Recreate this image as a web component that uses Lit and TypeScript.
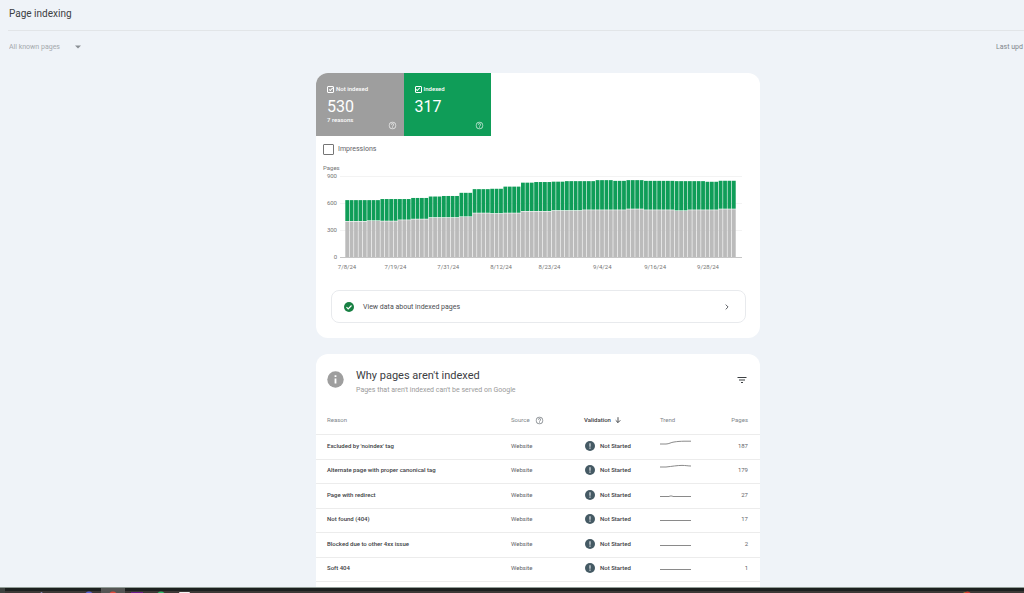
import { LitElement, html, css, svg, nothing } from "lit";
import { customElement, property } from "lit/decorators.js";

interface Run {
  days: number;
  value: number;
}

const NOT_INDEXED: Run[] = [
  { days: 5, value: 393 }, { days: 3, value: 400 }, { days: 4, value: 396 },
  { days: 3, value: 409 }, { days: 4, value: 418 }, { days: 7, value: 435 },
  { days: 3, value: 444 }, { days: 4, value: 485 }, { days: 3, value: 480 },
  { days: 4, value: 485 }, { days: 7, value: 504 }, { days: 7, value: 513 },
  { days: 10, value: 520 }, { days: 4, value: 530 }, { days: 7, value: 520 },
  { days: 3, value: 511 }, { days: 7, value: 520 }, { days: 4, value: 530 },
];

const TOTAL: Run[] = [
  { days: 8, value: 632 }, { days: 7, value: 644 }, { days: 4, value: 656 },
  { days: 3, value: 672 }, { days: 4, value: 678 }, { days: 3, value: 713 },
  { days: 4, value: 754 }, { days: 3, value: 758 }, { days: 4, value: 782 },
  { days: 3, value: 826 }, { days: 4, value: 833 }, { days: 3, value: 837 },
  { days: 7, value: 843 }, { days: 4, value: 854 }, { days: 3, value: 846 },
  { days: 4, value: 854 }, { days: 7, value: 846 }, { days: 7, value: 843 },
  { days: 3, value: 836 }, { days: 4, value: 847 },
];

const expand = (runs: Run[]): number[] =>
  runs.flatMap((r) => Array.from({ length: r.days }, () => r.value));

const DATES = ["7/8/24", "7/19/24", "7/31/24", "8/12/24", "8/23/24", "9/4/24", "9/16/24", "9/28/24"];

const REASONS = [
  { reason: "Excluded by 'noindex' tag", pages: "187", trend: "M0 8H6C9 8 11 6.3 14 6C18 5.4 20 5.3 24 5.2H31" },
  { reason: "Alternate page with proper canonical tag", pages: "179", trend: "M0 7H6C12 6.4 17 5.4 22 5.4C26 5.4 28 6 31 6" },
  { reason: "Page with redirect", pages: "27", trend: "M0 11.5H9L10 11H12L13 11.5H31" },
  { reason: "Not found (404)", pages: "17", trend: "M0 11.5H31" },
  { reason: "Blocked due to other 4xx issue", pages: "2", trend: "M0 11.5H31" },
  { reason: "Soft 404", pages: "1", trend: "M0 11.5H31" },
];

const helpIcon = html`<svg viewBox="0 0 24 24" width="9" height="9" fill="currentColor" aria-hidden="true">
  <path d="M11 18h2v-2h-2v2zm1-16C6.48 2 2 6.48 2 12s4.48 10 10 10 10-4.48 10-10S17.52 2 12 2zm0 18c-4.41 0-8-3.59-8-8s3.59-8 8-8 8 3.59 8 8-3.59 8-8 8zm0-14c-2.21 0-4 1.79-4 4h2c0-1.1.9-2 2-2s2 .9 2 2c0 2-3 1.75-3 5h2c0-2.25 3-2.5 3-5 0-2.21-1.79-4-4-4z"/>
</svg>`;

const alertIcon = html`<svg width="10" height="10" viewBox="0 0 10 10" aria-hidden="true">
  <circle cx="5" cy="5" r="5" fill="#455a64"/>
  <path d="M4.4 2.3h1.2v3.400H4.4zM4.4 6.600h1.200v1.200H4.400z" fill="#dfe5e8"/>
</svg>`;

@customElement("index-chart")
class IndexChart extends LitElement {
  static styles = css`
    :host { display: block; color: #757575; font-size: 6px; line-height: 8px; }
    .title { padding-left: 7px; }
    .plot { display: flex; padding: 0 18px 0 7px; }
    .scale { display: flex; flex-direction: column; justify-content: space-between; width: 14px; height: 89px; text-align: right; }
    .canvas { flex: 1; min-width: 0; height: 82px; margin: 4px 0 0 3px; display: block; }
    .dates { display: grid; grid-template-columns: 11fr 12fr 12fr 11fr 12fr 12fr 12fr 0; padding: 2px 52px 0 31px; }
    .date { display: flex; justify-content: center; width: 0; white-space: nowrap; }
  `;

  render() {
    const low = expand(NOT_INDEXED);
    const total = expand(TOTAL);
    const y = (v: number) => 81 - v * 0.09;
    const step = 391 / low.length;
    return html`
      <div class="title">Pages</div>
      <div class="plot">
        <div class="scale"><span>900</span><span>600</span><span>300</span><span>0</span></div>
        <svg class="canvas" viewBox="0 0 402 82" preserveAspectRatio="none" role="img" aria-label="Pages by day">
          ${[0, 27, 54].map((g) => svg`<rect x="0" y=${g} width="402" height="1" fill="#f3f3f3"/>`)}
          ${low.map((v, i) => {
            const x = 5.3 + i * step;
            return svg`
              <rect x=${x} y=${y(total[i])} width="3.8" height=${y(v) - y(total[i]) - 0.6} fill="#0f9d58"/>
              <rect x=${x} y=${y(v)} width="3.8" height=${81 - y(v)} fill="#bbb"/>`;
          })}
          <rect x="0" y="81" width="402" height="1" fill="#c6c6c6"/>
        </svg>
      </div>
      <div class="dates">${DATES.map((d) => html`<span class="date">${d}</span>`)}</div>
    `;
  }
}

@customElement("count-tile")
class CountTile extends LitElement {
  @property() label = "";
  @property() count = "";
  @property() note = "";

  static styles = css`
    :host { display: flex; flex-direction: column; flex: 1; box-sizing: border-box; height: 63px; padding: 11px 11px 0; color: #fff; font-size: 6px; line-height: 10px; font-weight: 500; }
    .name { display: flex; align-items: center; gap: 2px; }
    .tick { appearance: none; box-sizing: border-box; width: 7px; height: 7px; margin: 0; border: 1px solid #fff; border-radius: 1px; display: grid; place-items: center; }
    .tick:checked::before { content: ""; width: 3px; height: 1px; border: solid #fff; border-width: 0 0 1px 1px; transform: rotate(-45deg); }
    .count { font-size: 16px; line-height: 25px; font-weight: 400; }
    .foot { display: flex; justify-content: space-between; line-height: 2px; }
    .help { display: flex; margin: 2px -4px 0 auto; padding: 0; border: 0; background: none; color: #fff; opacity: .75; }
  `;

  render() {
    return html`
      <label class="name"><input class="tick" type="checkbox" checked />${this.label}</label>
      <div class="count">${this.count}</div>
      <div class="foot"><span>${this.note}</span><button class="help" aria-label="Help">${helpIcon}</button></div>
    `;
  }
}

@customElement("app-root")
class AppRoot extends LitElement {
  static styles = css`
    :host { display: flex; flex-direction: column; height: 100vh; overflow: hidden; background: #eff3f8; color: #5f6368; font-family: Roboto, sans-serif; font-size: 6px; line-height: 8px; }
    button, select { font: inherit; color: inherit; border: 0; padding: 0; background: none; }
    h1, h2, p { margin: 0; font-weight: 400; }
    .header { flex: none; margin-left: 8px; border-bottom: 1px solid #e2e5e8; padding: 7px 1px 9px; }
    .header h1 { color: #3c4043; font-size: 10px; line-height: 14px; }
    .filters { flex: none; display: flex; justify-content: space-between; padding: 10px 0 0 9px; font-size: 7px; line-height: 12px; color: #80868b; }
    .scope { display: flex; align-items: center; color: #a5a9ad; }
    .scope select { appearance: none; width: 72px; margin-right: -6px; line-height: 12px; }
    .scope svg { pointer-events: none; }
    .updated { width: 28px; overflow: hidden; white-space: nowrap; }
    .main { flex: 1; min-height: 0; overflow: hidden; padding: 20px 0 0 52px; }
    .card { box-sizing: border-box; width: 100%; max-width: 444px; margin: 0 auto 16px; background: #fff; border-radius: 12px; overflow: hidden; }
    .tiles { display: flex; width: 175px; }
    .grey { background: #9e9e9e; }
    .green { background: #0f9d58; }
    .impressions { display: flex; align-items: center; gap: 4px; padding: 7px; font-size: 7px; line-height: 12px; }
    .box { appearance: none; box-sizing: border-box; width: 11px; height: 11px; margin: 0; border: 1px solid #757575; border-radius: 1px; }
    .chart { margin-top: 2px; }
    .view { display: flex; align-items: center; margin: 19px 14px 15px 15px; height: 33px; box-sizing: border-box; padding: 0 14px 0 11px; border: 1px solid #e8eaed; border-radius: 8px; color: #4a4d51; font-size: 7px; text-decoration: none; }
    .view span { flex: 1; padding-left: 8px; }
    .heading { display: flex; align-items: flex-start; padding: 14px 12px 0 11px; }
    .heading svg { flex: none; }
    .info { margin-top: 3px; }
    .words { flex: 1; padding-left: 12px; }
    .words h2 { color: #3c4043; font-size: 11px; line-height: 16px; }
    .words p { font-size: 7px; line-height: 12px; color: #9a9a9a; }
    .filter { display: flex; margin-top: 6px; color: #3c4043; }
    .reasons { width: 100%; margin-top: 9px; border-collapse: collapse; table-layout: fixed; }
    th, td { padding: 0 0 2px; text-align: left; font-weight: 400; height: 24px; box-sizing: border-box; border-bottom: 1px solid #ececec; }
    th { height: 29px; padding: 2px 0 0; color: #80868b; }
    tbody tr:nth-child(odd) td { height: 25px; }
    .reason { width: 195px; padding-left: 11px; }
    td.reason { font-weight: 500; color: #3c4043; }
    .source { width: 73px; }
    .validation { width: 76px; }
    .pages { text-align: right; padding-right: 12px; }
    .inline { display: flex; align-items: center; gap: 5px; }
    .sorted { color: #3c4043; font-weight: 500; gap: 3px; }
    .state { color: #3c4043; font-weight: 500; padding-left: 1px; }
    .trend svg { display: block; }
    .taskbar { flex: none; display: flex; height: 6px; box-sizing: border-box; border-top: 1px solid #929d98; background: linear-gradient(#1c201f 0 3px, #3c3836 3px); padding-right: 45px; overflow: hidden; }
    .edge { width: 5px; background: #3e4240; }
    .app { width: 24px; }
    .app svg { display: block; }
    .active { background: #555655; }
    .tray { margin-left: auto; }
  `;

  render() {
    return html`
      <header class="header"><h1>Page indexing</h1></header>
      <div class="filters">
        <div class="scope">
          <select aria-label="Pages shown"><option>All known pages</option></select>
          <svg width="6" height="4" viewBox="0 0 6 4"><path d="M0 .4h6L3 3.6z" fill="#8a8f94"/></svg>
        </div>
        <div class="updated">Last upd</div>
      </div>
      <main class="main">
        <section class="card">
          <div class="tiles">
            <count-tile class="grey" label="Not indexed" count="530" note="7 reasons"></count-tile>
            <count-tile class="green" label="Indexed" count="317"></count-tile>
          </div>
          <label class="impressions"><input class="box" type="checkbox" />Impressions</label>
          <index-chart class="chart"></index-chart>
          <a class="view" href="#indexed">
            <svg width="12" height="12" viewBox="0 0 24 24" aria-hidden="true"><circle cx="12" cy="12" r="10" fill="#188043"/><path d="M7 12.2l3.4 3.4L17 9" fill="none" stroke="#fff" stroke-width="2.4"/></svg>
            <span>View data about indexed pages</span>
            <svg width="8" height="8" viewBox="0 0 8 8" aria-hidden="true"><path d="M2.7 1.6L5.100 4 2.700 6.400" fill="none" stroke="#5f6368"/></svg>
          </a>
        </section>
        <section class="card">
          <div class="heading">
            <svg class="info" width="17" height="17" viewBox="0 0 17 17" aria-hidden="true"><circle cx="8.5" cy="8.5" r="8.2" fill="#9e9e9e"/><path d="M7.6 4.3h1.800v1.800H7.600zM7.600 7.400h1.800v5H7.600z" fill="#fff"/></svg>
            <div class="words">
              <h2>Why pages aren't indexed</h2>
              <p>Pages that aren't indexed can't be served on Google</p>
            </div>
            <button class="filter" aria-label="Filter rows">
              <svg width="12" height="12" viewBox="0 0 24 24" fill="currentColor"><path d="M10 18h4v-2h-4v2zM3 6v2h18V6H3zm3 7h12v-2H6v2z"/></svg>
            </button>
          </div>
          <table class="reasons">
            <thead>
              <tr>
                <th class="reason">Reason</th>
                <th class="source"><div class="inline">Source ${helpIcon}</div></th>
                <th class="validation"><button class="inline sorted">Validation
                  <svg width="8" height="8" viewBox="0 0 8 8" fill="none" stroke="currentColor" stroke-width=".9"><path d="M4 1.200v5.300M1.700 4.300L4 6.600l2.300-2.300"/></svg></button></th>
                <th class="trend">Trend</th>
                <th class="pages">Pages</th>
              </tr>
            </thead>
            <tbody>
              ${REASONS.map((r) => html`
                <tr>
                  <td class="reason">${r.reason}</td>
                  <td class="source">Website</td>
                  <td class="validation"><div class="inline state">${alertIcon} Not Started</div></td>
                  <td class="trend"><svg width="31" height="16" viewBox="0 2 31 16" fill="none" stroke="#8a8a8a" aria-label="Trend"><path d=${r.trend}/></svg></td>
                  <td class="pages">${r.pages}</td>
                </tr>`)}
              <tr>
                <td class="reason">${nothing}</td>
                <td class="source"></td>
                <td class="validation"><div class="inline state">${alertIcon}</div></td>
                <td class="trend"></td>
                <td class="pages"></td>
              </tr>
            </tbody>
          </table>
        </section>
      </main>
      <footer class="taskbar">
        <div class="edge"></div>
        <div class="app"></div>
        <div class="app"><svg width="24" height="5"><circle cx="12.5" cy="5" r="1" fill="#8a8fc0"/></svg></div>
        <div class="app"></div>
        <div class="app"><svg width="24" height="5"><circle cx="12" cy="8" r="4.5" fill="#5b64d8"/></svg></div>
        <div class="app active"><svg width="24" height="5"><circle cx="12" cy="8" r="4.5" fill="#e0493c"/></svg></div>
        <div class="app"><svg width="24" height="5"><rect x="6" y="4" width="12" height="4" fill="#6a1a8c"/></svg></div>
        <div class="app"><svg width="24" height="5"><circle cx="12" cy="8" r="4.5" fill="#2ebd6b"/></svg></div>
        <div class="app"><svg width="24" height="5"><rect x="6" y="4" width="11" height="4" rx="1" fill="#f1f1f1"/></svg></div>
        <div class="app tray"><svg width="24" height="5"><circle cx="10.5" cy="7" r="3" fill="#9a8a2c"/><circle cx="12.5" cy="7" r="3.5" fill="#d63a2c"/></svg></div>
      </footer>
    `;
  }
}
